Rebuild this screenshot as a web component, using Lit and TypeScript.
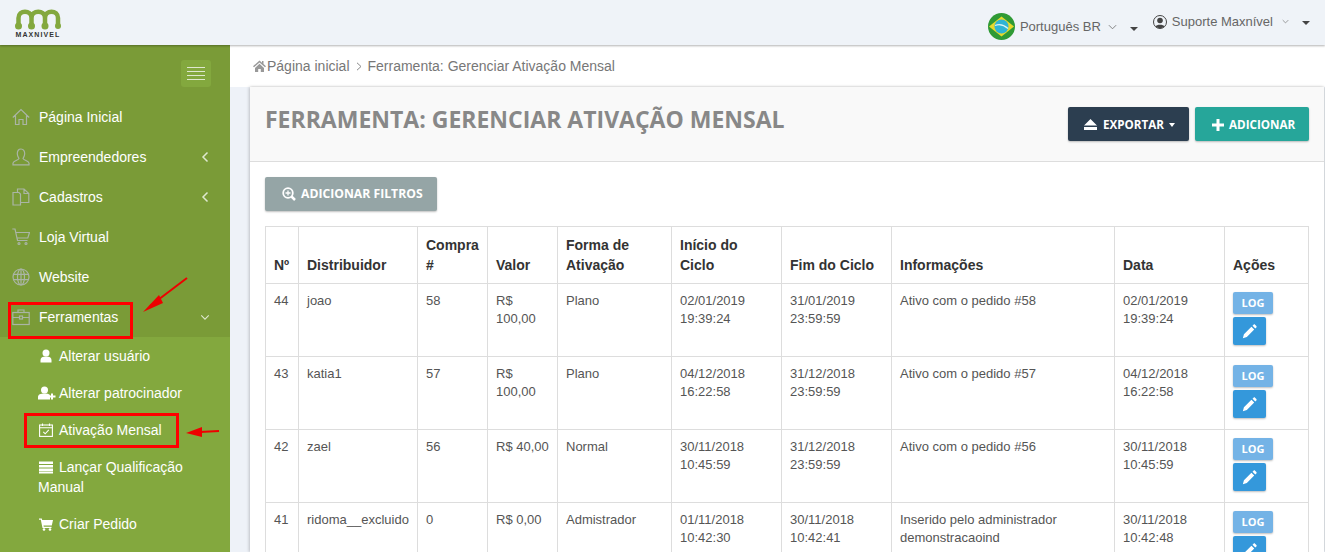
import { LitElement, html, css, svg } from "lit";
import { customElement } from "lit/decorators.js";

const rows = [
  ["44","joao","58","R$ 100,00","Plano","02/01/2019 19:39:24","31/01/2019 23:59:59","Ativo com o pedido #58","02/01/2019 19:39:24"],
  ["43","katia1","57","R$ 100,00","Plano","04/12/2018 16:22:58","31/12/2018 23:59:59","Ativo com o pedido #57","04/12/2018 16:22:58"],
  ["42","zael","56","R$ 40,00","Normal","30/11/2018 10:45:59","31/12/2018 23:59:59","Ativo com o pedido #56","30/11/2018 10:45:59"],
  ["41","ridoma__excluido","0","R$ 0,00","Admistrador","01/11/2018 10:42:30","30/11/2018 10:42:41","Inserido pelo administrador demonstracaoind","30/11/2018 10:42:48"],
];
const heads = ["Nº","Distribuidor","Compra #","Valor","Forma de Ativação","Início do Ciclo","Fim do Ciclo","Informações","Data","Ações"];
const widths = [33,119,70,70,114,110,110,223,110,84];

const ic = (p: unknown) => html`<svg class="nav-ic" viewBox="0 0 18 18" fill="none" stroke="#aab5a5" stroke-width="1.200">${p}</svg>`;
const navIcons = {
  home: ic(svg`<path d="M.8 9.500 9 1.500 17.200 9.500M3.500 7.500V16.500H7V11.500H11V16.500H14.500V7.500"/>`),
  user: ic(svg`<path d="M9 1C6.500 1 5.300 3.200 5.300 5.800 5.300 8 6.500 9.500 7 10.500 7 12 1.500 12.500 1 15V16.800H17V15C16.500 12.500 11 12 11 10.500 11.500 9.500 12.700 8 12.700 5.800 12.700 3.200 11.500 1 9 1Z"/>`),
  docs: ic(svg`<path d="M1 4.500H7L8.500 6V17H1ZM7 1H12L16.800 5.500V14.500H8.500M12 1V5.500H16.800M5.500 4.500V1H7"/>`),
  cart: ic(svg`<path d="M.3 1H3L5.500 12.500H15.500M3.600 4.500H17.500L15.800 10H5"/><circle cx="7" cy="15.500" r="1"/><circle cx="14" cy="15.500" r="1"/>`),
  globe: ic(svg`<circle cx="9" cy="9" r="8"/><ellipse cx="9" cy="9" rx="3.500" ry="8"/><path d="M9 1V17M1.500 6.300H16.500M1.500 11.700H16.500"/>`),
  case: ic(svg`<rect x=".8" y="4.500" width="16.400" height="12"/><path d="M6 4.500V2H12V4.500M.8 9.500H7.500M10.500 9.500H17.200"/><rect x="7.500" y="8" width="3" height="3"/>`),
};
const chevL = html`<svg class="chev" viewBox="0 0 8 12" fill="none" stroke="#dfe8cf" stroke-width="1.500"><path d="M6.500 1.500 2 6l4.500 4.500"/></svg>`;
const chevD = html`<svg class="chev-d" viewBox="0 0 12 8" fill="none" stroke="#dfe8cf" stroke-width="1.300"><path d="M1.500 1.500 6 6l4.500-4.500"/></svg>`;
const smallChev = html`<svg class="small-chev" viewBox="0 0 10 6" fill="none" stroke="#777" stroke-width="1"><path d="M1 1l4 4 4-4"/></svg>`;
const caret = html`<span class="caret"></span>`;

const subIcons = {
  user: html`<svg class="sub-ic" viewBox="0 0 14 14" fill="#fff"><circle cx="7" cy="4" r="3.500"/><path d="M1.500 13.500V11C1.500 8.500 3.500 7.500 7 7.500S12.500 8.500 12.500 11V13.500Z"/></svg>`,
  plus: html`<svg class="sub-ic wide" viewBox="0 0 18 14" fill="#fff"><circle cx="6.500" cy="4" r="3.500"/><path d="M0 13.500V11C0 8.500 2.500 7.500 6.500 7.500S12 8.500 12 9.500V13.500ZM13 7.500H15V9.500H17.500V11.500H15V13.500H13V11.500H10.500V9.500H13Z"/></svg>`,
  cal: html`<svg class="sub-ic" viewBox="0 0 14 14" fill="none" stroke="#fff" stroke-width="1.100"><rect x=".6" y="2" width="12.800" height="11.400"/><path d="M.6 4.700H13.400M3.500 .5V3M10.500 .5V3M4.300 8.800 6.200 10.800 9.800 6.800"/></svg>`,
  list: html`<svg class="sub-ic" viewBox="0 0 14 14" fill="#fff"><path d="M0 1.500H14V4H0ZM0 5H14V7.500H0ZM0 8.500H14V11H0ZM0 11.500H14V13.500H0Z"/></svg>`,
  cart: html`<svg class="sub-ic" viewBox="0 0 14 14" fill="#fff"><path d="M0 1.500H2.800L3.200 3H14L12.800 8.500H4.500L4.800 9.800H12.500V11H3.500L1.800 2.700H0Z"/><circle cx="5" cy="12.500" r="1.300"/><circle cx="11" cy="12.500" r="1.300"/></svg>`,
};

@customElement("app-root")
export class AppRoot extends LitElement {
  static styles = css`
    :host { display: block; width: 1325px; height: 552px; overflow: hidden; font-family: "Liberation Sans", Arial, sans-serif; background: #eef2f8; }
    * { box-sizing: border-box; }
    .top { height: 45px; background: #eff3f8; display: flex; align-items: flex-start; justify-content: space-between; box-shadow: 0 1px 2px rgba(0,0,0,.3); position: relative; z-index: 2; padding: 0 15px 0 15px; }
    .logo { display: flex; flex-direction: column; align-items: center; width: 46px; margin-top: 8px; }
    .logo svg { width: 46px; height: 22px; display: block; }
    .logo span { font: bold 7px/8px "Liberation Sans", Arial, sans-serif; color: #333; letter-spacing: 1.100px; margin-top: 1px; white-space: nowrap; }
    .top-right { display: flex; align-items: flex-start; font-size: 13px; color: #666; padding-top: 13px; }
    .lang { display: flex; align-items: center; height: 27px; }
    .flag { width: 27px; height: 27px; margin-right: 5px; display: block; }
    .small-chev { width: 9px; height: 6px; margin-left: 7px; }
    .caret { display: inline-block; width: 0; height: 0; border-left: 4px solid transparent; border-right: 4px solid transparent; border-top: 4px solid #444; }
    .lang .caret { margin-left: 13px; margin-top: 4px; }
    .who { display: flex; align-items: center; margin-left: 15px; margin-top: -5px; height: 27px; }
    .who svg.av { width: 14px; height: 14px; margin-right: 5px; }
    .who .small-chev { margin-left: 9px; width: 7px; height: 5px; }
    .who .caret { margin-left: 13px; margin-top: 2px; }
    .body { display: flex; height: 507px; }
    aside { width: 230px; flex: none; background: #7a9b37; overflow: hidden; }
    .burger-row { height: 52px; display: flex; justify-content: flex-end; padding: 15px 19px 0 0; }
    .burger { width: 30px; height: 27px; border-radius: 3px; background: #83a83e; display: flex; flex-direction: column; justify-content: center; gap: 3px; padding: 0 6px; }
    .burger i { display: block; height: 1px; background: #dfe8cf; }
    .nav { display: flex; align-items: center; height: 40px; padding: 0 21px 0 12px; color: #fff; font-size: 14px; }
    .nav-ic { width: 18px; height: 18px; margin-right: 9px; flex: none; }
    .nav span { flex: 1; }
    .chev { width: 8px; height: 12px; }
    .chev-d { width: 10px; height: 7px; margin-right: -1px; }
    .sub { background: #83a83e; height: 230px; }
    .sub a { display: block; color: #fff; font-size: 14px; line-height: 20px; padding: 9px 20px 8px 38px; height: 37px; }
    .sub a.two { height: 57px; }
    .sub-ic { width: 14px; height: 14px; margin: 0 6px 0 1px; vertical-align: -2px; }
    .sub-ic.wide { width: 18px; margin: 0 3px 0 0; }
    main { flex: 1; min-width: 0; }
    .crumb { height: 42px; background: #fff; display: flex; align-items: center; padding-left: 23px; color: #777; font-size: 14px; }
    .crumb svg { width: 13px; height: 12px; margin-right: 1px; }
    .crumb .sep { width: 6px; height: 9px; margin: 0 6px 0 6px; }
    .wrap { padding-left: 20px; padding-right: 1px; }
    .card { background: #fff; box-shadow: -1px 0 3px rgba(0,0,0,.2), 1px 0 2px rgba(0,0,0,.12); height: 465px; overflow: hidden; }
    .card-head { height: 75px; background: #f9f9f9; border-bottom: 1px solid #ddd; display: flex; justify-content: space-between; padding: 20px 15px 0 15px; }
    h1 { margin: 0; font: 700 23px/24px "Open Sans", sans-serif; color: #888; }
    .btns { display: flex; gap: 6px; }
    .btn { height: 34px; border-radius: 2px; border: 0; color: #fff; font: 700 12.200px/34px "Open Sans", sans-serif; display: flex; align-items: center; box-shadow: 0 1px 2px rgba(0,0,0,.25); white-space: nowrap; }
    .btns .btn { font-size: 11.650px; padding-top: 1px; }
    .exp { background: #2c3e50; width: 121px; padding-left: 16px; }
    .exp svg { width: 13px; height: 11px; margin-right: 6px; }
    .exp .caret { border-top-color: #fff; border-left-width: 3.500px; border-right-width: 3.500px; margin-left: 5px; }
    .add { background: #26a69a; width: 114px; padding-left: 17px; }
    .add svg { width: 12px; height: 12px; margin-right: 5px; }
    .filt { background: #95a5a6; width: 172px; margin: 15px 0 0 15px; padding-left: 17px; }
    .filt svg { width: 14px; height: 14px; margin-right: 5px; }
    table { border-collapse: collapse; table-layout: fixed; width: 1044px; margin: 15px 0 0 15px; font-size: 13px; color: #555; }
    th, td { border: 1px solid #ddd; padding: 8px; line-height: 18px; text-align: left; vertical-align: top; }
    th { font-size: 14px; line-height: 20px; color: #333; vertical-align: bottom; padding: 8px; }
    tbody tr { height: 73px; }
    .log { display: block; width: 40px; height: 22px; border-radius: 2px; background: #74b3e6; color: #fff; font: 700 11px/22px "Open Sans", sans-serif; text-align: center; box-shadow: 0 1px 2px rgba(0,0,0,.25); }
    .pen { display: flex; align-items: center; justify-content: center; width: 33px; height: 28px; margin-top: 3px; border-radius: 2px; background: #3498db; box-shadow: 0 1px 2px rgba(0,0,0,.25); }
    .pen svg { width: 15px; height: 15px; }
    .act { padding-top: 8px; padding-bottom: 0; }
    .ann { position: absolute; left: 0; top: 0; width: 1325px; height: 552px; pointer-events: none; z-index: 5; }
    .stage { position: relative; }
  `;

  render() {
    return html`<div class="stage">
      <header class="top">
        <div class="logo">
          <svg viewBox="0 0 46 22" fill="none" stroke="#83a83e" stroke-width="4.500">
            <path d="M3.500 17V10C3.500 1.500 16.500 1.500 16.500 10V17M16.500 10C16.500 1.500 30 1.500 30 10V17M30 10C30 1.500 43 1.500 43 10V17"/>
            <g fill="#83a83e" stroke="none"><circle cx="3.500" cy="18" r="3.500"/><circle cx="16.500" cy="18" r="3.500"/><circle cx="30" cy="18" r="3.500"/><circle cx="43" cy="18" r="3"/></g>
          </svg>
          <span>MAXNIVEL</span>
        </div>
        <div class="top-right">
          <div class="lang">
            <svg class="flag" viewBox="0 0 27 27">
              <circle cx="13.500" cy="13.500" r="13.500" fill="#2f9a35"/>
              <path d="M13.500 3.500 26 13.500 13.500 23.500 1 13.500Z" fill="#e6d92c"/>
              <circle cx="13.500" cy="13.500" r="7" fill="#2fb4d4"/>
              <path d="M7 12.500C11 11 16 12 20 15.500" stroke="#d8f2f5" stroke-width="1.200" fill="none"/>
            </svg>
            <span>Português BR</span>${smallChev}${caret}
          </div>
          <div class="who">
            <svg class="av" viewBox="0 0 14 14"><circle cx="7" cy="7" r="6.500" fill="none" stroke="#444"/><circle cx="7" cy="5.500" r="2.800" fill="#444"/><path d="M2.500 11.500C3.500 9 10.500 9 11.500 11.500 9 13.800 5 13.800 2.500 11.500Z" fill="#444"/></svg>
            <span>Suporte Maxnível</span>${smallChev}${caret}
          </div>
        </div>
      </header>
      <div class="body">
        <aside>
          <div class="burger-row"><div class="burger"><i></i><i></i><i></i><i></i></div></div>
          <div class="nav">${navIcons.home}<span>Página Inicial</span></div>
          <div class="nav">${navIcons.user}<span>Empreendedores</span>${chevL}</div>
          <div class="nav">${navIcons.docs}<span>Cadastros</span>${chevL}</div>
          <div class="nav">${navIcons.cart}<span>Loja Virtual</span></div>
          <div class="nav">${navIcons.globe}<span>Website</span></div>
          <div class="nav">${navIcons.case}<span>Ferramentas</span>${chevD}</div>
          <div class="sub">
            <a>${subIcons.user}Alterar usuário</a>
            <a>${subIcons.plus}Alterar patrocinador</a>
            <a>${subIcons.cal}Ativação Mensal</a>
            <a class="two">${subIcons.list}Lançar Qualificação Manual</a>
            <a>${subIcons.cart}Criar Pedido</a>
          </div>
        </aside>
        <main>
          <div class="crumb">
            <svg viewBox="0 0 13 12" fill="#999"><path d="M6.500 .5 0 6.300 1 7.300 6.500 2.500 12 7.300 13 6.300 10.500 4V1H9V2.700ZM2 8V12H5.200V9H7.800V12H11V8L6.500 3.800Z"/></svg>
            <span>Página inicial</span>
            <svg class="sep" viewBox="0 0 6 9" fill="none" stroke="#888"><path d="M1 .8 5 4.500 1 8.200"/></svg>
            <span>Ferramenta: Gerenciar Ativação Mensal</span>
          </div>
          <div class="wrap">
            <div class="card">
              <div class="card-head">
                <h1>FERRAMENTA: GERENCIAR ATIVAÇÃO MENSAL</h1>
                <div class="btns">
                  <div class="btn exp"><svg viewBox="0 0 13 11" fill="#fff"><path d="M6.500 0 13 6.500H0ZM0 8H13V11H0Z"/></svg>EXPORTAR${caret}</div>
                  <div class="btn add"><svg viewBox="0 0 12 12" fill="#fff"><path d="M4.500 0H7.500V4.500H12V7.500H7.500V12H4.500V7.500H0V4.500H4.500Z"/></svg>ADICIONAR</div>
                </div>
              </div>
              <div class="btn filt"><svg viewBox="0 0 14 14" fill="none" stroke="#fff" stroke-width="1.800"><circle cx="6" cy="6" r="4.800"/><path d="M9.500 9.500 13 13" stroke-width="2.500"/><path d="M3.500 6H8.500M6 3.500V8.500" stroke-width="1.300"/></svg>ADICIONAR FILTROS</div>
              <table>
                <colgroup>${widths.map((w) => html`<col style="width:${w}px" />`)}</colgroup>
                <thead><tr>${heads.map((h) => html`<th>${h}</th>`)}</tr></thead>
                <tbody>
                  ${rows.map((r) => html`<tr>${r.map((c) => html`<td>${c}</td>`)}<td class="act"><span class="log">LOG</span><span class="pen"><svg viewBox="0 0 14 14" fill="#fff"><path d="M8.800 2.600 11.400 5.200 4.500 12.200 .8 13.200 1.800 9.500ZM9.800 1.600 10.800 .6C11.200 .2 11.800 .2 12.200 .6L13.400 1.800C13.800 2.200 13.800 2.800 13.400 3.200L12.400 4.200Z"/></svg></span></td></tr>`)}
                </tbody>
              </table>
            </div>
          </div>
        </main>
      </div>
      <svg class="ann" viewBox="0 0 1325 552" fill="none">
        <rect x="9.500" y="303.500" width="122" height="34" stroke="#f00" stroke-width="3"/>
        <rect x="25.500" y="414.500" width="152" height="32" stroke="#f00" stroke-width="3"/>
        <path d="M187 278 150 306" stroke="#e00" stroke-width="2"/>
        <path d="M143 312 159 295 163 303Z" fill="#e00"/>
        <path d="M219 431 200 432" stroke="#e00" stroke-width="2"/>
        <path d="M186 433 202 427 202 437Z" fill="#e00"/>
      </svg>
    </div>`;
  }
}
